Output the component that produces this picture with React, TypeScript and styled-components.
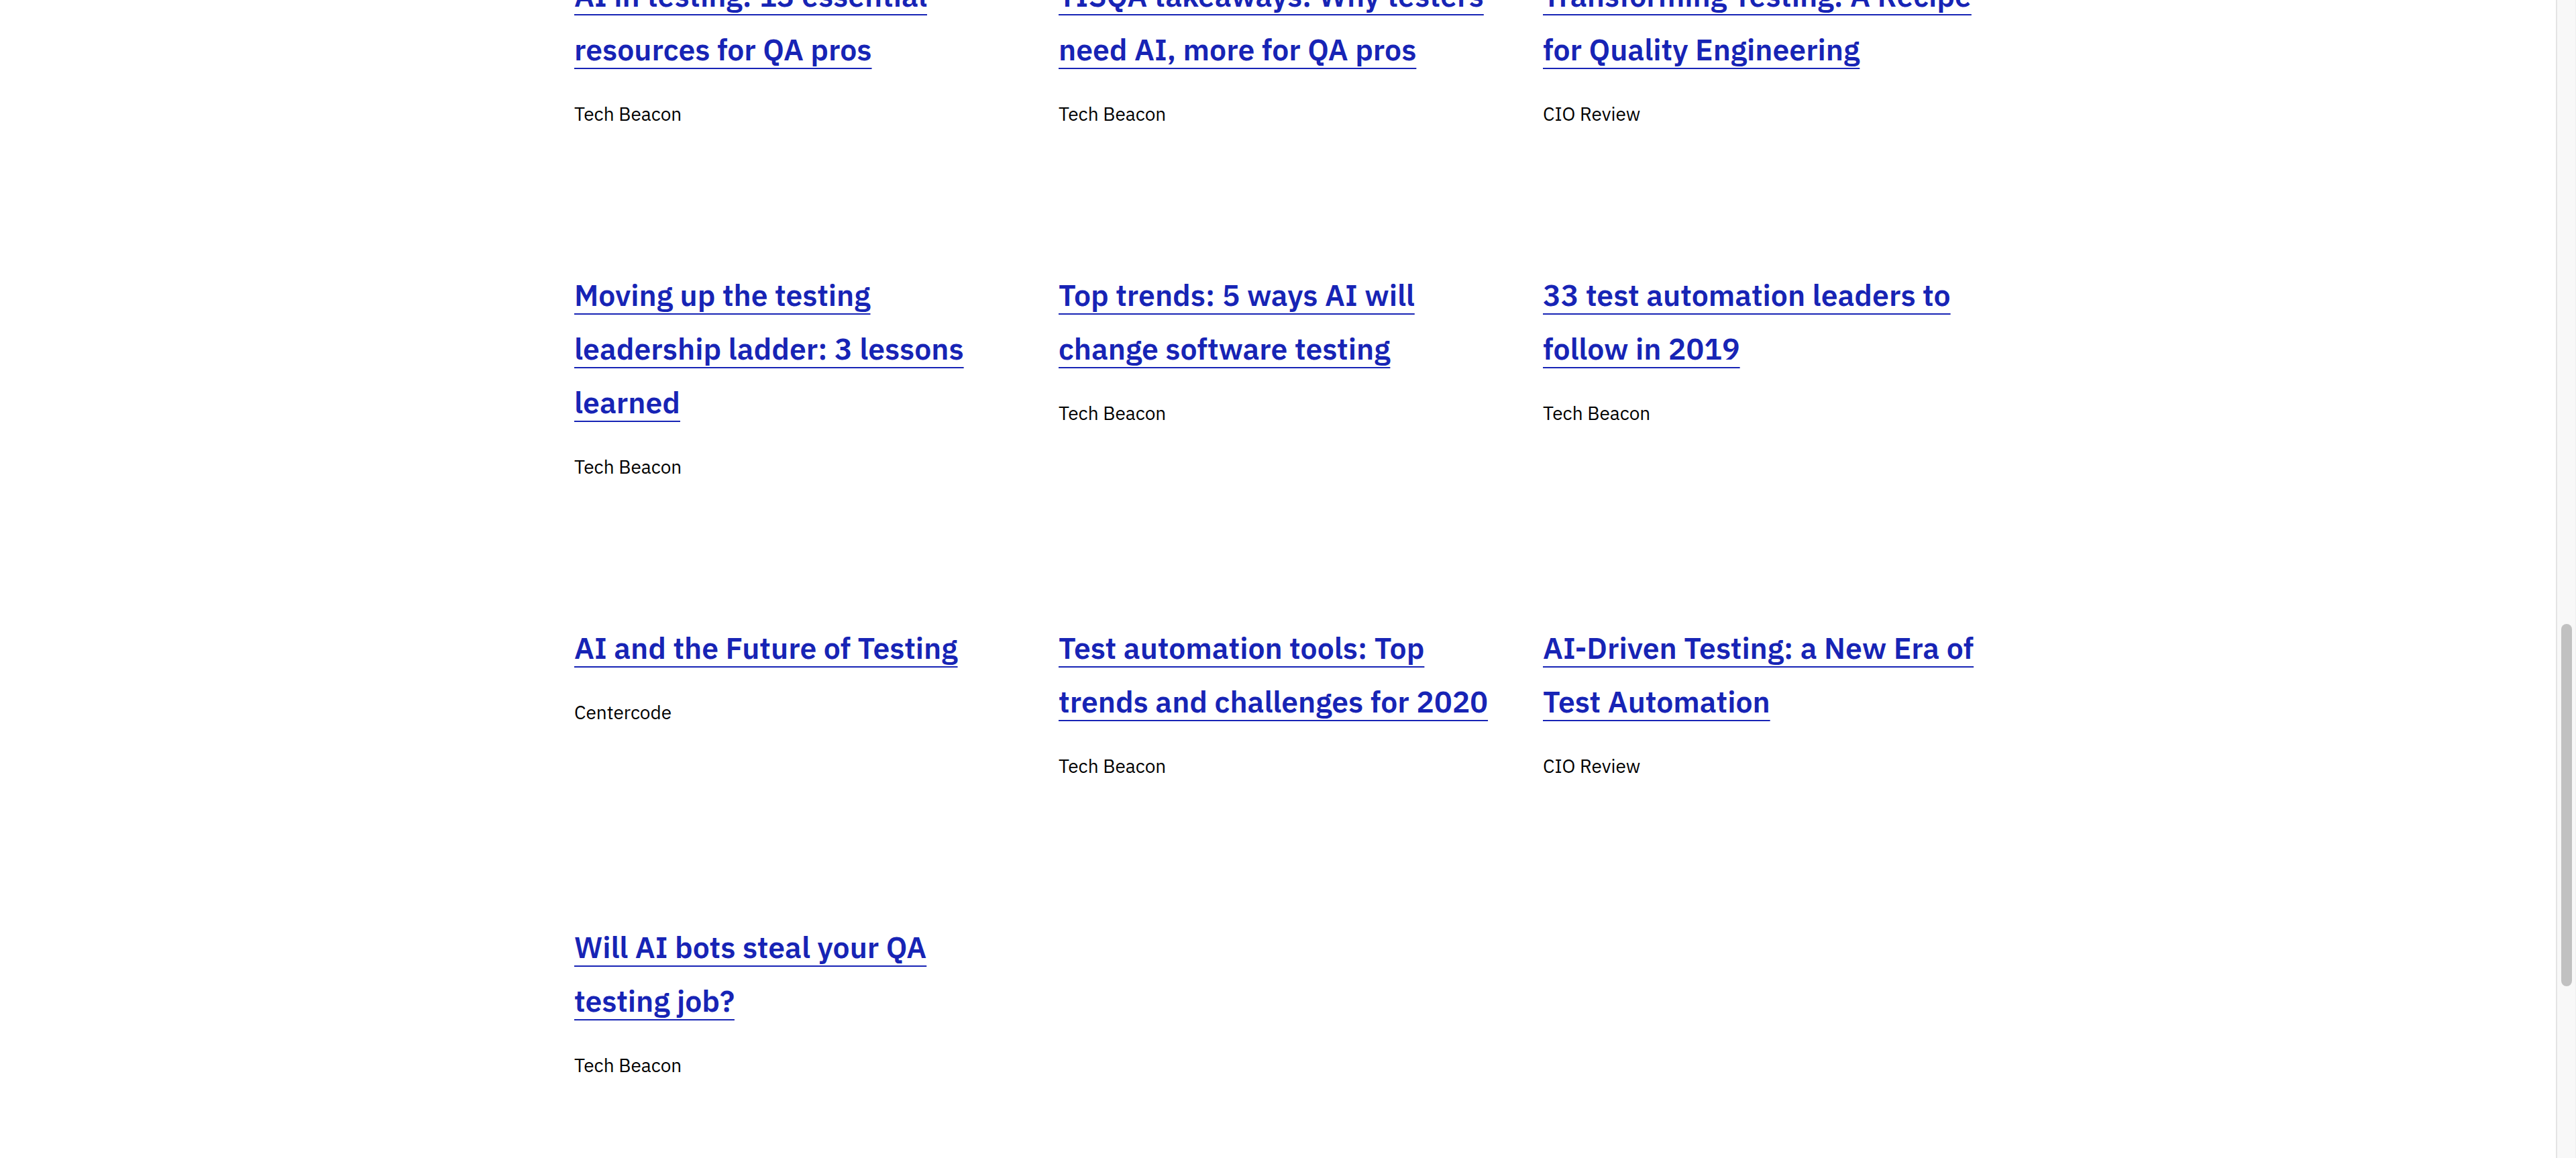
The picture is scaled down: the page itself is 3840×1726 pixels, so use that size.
import React from "react";
import styled, { createGlobalStyle } from "styled-components";

const GlobalStyle = createGlobalStyle`
  html, body {
    margin: 0;
    padding: 0;
    background: #ffffff;
    overflow: hidden;
  }
  * { box-sizing: border-box; }
`;

type Article = { lines: string[]; source: string };

const articles: Article[] = [
  { lines: ["AI in testing: 13 essential", "resources for QA pros"], source: "Tech Beacon" },
  { lines: ["TISQA takeaways: Why testers", "need AI, more for QA pros"], source: "Tech Beacon" },
  { lines: ["Transforming Testing: A Recipe", "for Quality Engineering"], source: "CIO Review" },
  { lines: ["Moving up the testing", "leadership ladder: 3 lessons", "learned"], source: "Tech Beacon" },
  { lines: ["Top trends: 5 ways AI will", "change software testing"], source: "Tech Beacon" },
  { lines: ["33 test automation leaders to", "follow in 2019"], source: "Tech Beacon" },
  { lines: ["AI and the Future of Testing"], source: "Centercode" },
  { lines: ["Test automation tools: Top", "trends and challenges for 2020"], source: "Tech Beacon" },
  { lines: ["AI-Driven Testing: a New Era of", "Test Automation"], source: "CIO Review" },
  { lines: ["Will AI bots steal your QA", "testing job?"], source: "Tech Beacon" },
];

const Page = styled.div`
  display: flex;
  width: 100%;
  height: 1726px;
  overflow: hidden;
`;

const Main = styled.main`
  flex: 1;
  min-width: 0;
  overflow: hidden;
`;

const Grid = styled.section`
  display: grid;
  grid-template-columns: repeat(3, 690px);
  column-gap: 32px;
  row-gap: 209px;
  align-items: start;
  margin: -47px 0 0 856px;
`;

const Card = styled.article`
  display: flex;
  flex-direction: column;
  align-items: flex-start;
`;

const TitleLink = styled.a`
  font-family: "IBM Plex Sans", Roboto, "Liberation Sans", sans-serif;
  font-size: 44.5px;
  font-weight: 600;
  line-height: 80px;
  color: #1724b5;
  text-decoration: underline;
  text-decoration-thickness: 2px;
  text-underline-offset: 11px;
  white-space: nowrap;
  cursor: pointer;
`;

const Source = styled.p`
  margin: 37px 0 0;
  font-family: "IBM Plex Sans", Roboto, "Liberation Sans", sans-serif;
  font-size: 28px;
  font-weight: 400;
  line-height: 40px;
  color: #000000;
`;

const ScrollTrack = styled.div`
  position: relative;
  flex: 0 0 30px;
  height: 100%;
  background: #f8f8f8;
  border-left: 2px solid #e4e4e4;
  border-right: 1px solid #efefef;
`;

const ScrollThumb = styled.div`
  position: absolute;
  left: 6px;
  width: 16px;
  top: 930px;
  height: 540px;
  border-radius: 8px;
  background: #c1c1c1;
`;

function ArticleCard({ article }: { article: Article }) {
  return (
    <Card>
      <TitleLink href="#">
        {article.lines.map((line, i) => (
          <React.Fragment key={i}>
            {i > 0 && <br />}
            {line}
          </React.Fragment>
        ))}
      </TitleLink>
      <Source>{article.source}</Source>
    </Card>
  );
}

export default function App() {
  return (
    <>
      <GlobalStyle />
      <Page>
        <Main>
          <Grid>
            {articles.map((a, i) => (
              <ArticleCard key={i} article={a} />
            ))}
          </Grid>
        </Main>
        <ScrollTrack>
          <ScrollThumb />
        </ScrollTrack>
      </Page>
    </>
  );
}
